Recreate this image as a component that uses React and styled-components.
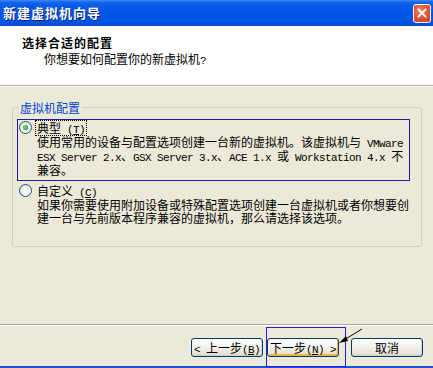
import React from 'react';
import styled, { createGlobalStyle } from 'styled-components';

const GlobalStyle = createGlobalStyle`
  html, body {
    margin: 0;
    padding: 0;
    width: 433px;
    height: 368px;
    overflow: hidden;
    background: #ece9d8;
  }
  body {
    font-family: "Noto Sans CJK SC", "Liberation Sans", sans-serif;
    font-size: 12px;
    color: #000;
  }
`;

const Window = styled.div`
  width: 433px;
  height: 368px;
  display: flex;
  flex-direction: column;
  background: #ece9d8;
`;

const TitleBar = styled.div`
  height: 26px;
  flex: 0 0 26px;
  display: flex;
  align-items: center;
  justify-content: space-between;
  padding: 0 2px 0 3px;
  box-sizing: border-box;
  background: linear-gradient(
    to bottom,
    #3d8df5 0,
    #1868ee 2px,
    #0a5ce6 5px,
    #0054e3 13px,
    #0056e6 21px,
    #0049cf 26px
  );
`;

const TitleText = styled.span`
  color: #fff;
  font-size: 13px;
  font-weight: bold;
  letter-spacing: 1px;
  line-height: 26px;
  text-shadow: 1px 1px 0 #0a1f7a;
`;

const CloseButton = styled.div`
  width: 18px;
  height: 19px;
  box-sizing: border-box;
  border: 1px solid #fff;
  border-radius: 3px;
  background: radial-gradient(circle at 40% 35%, #f08a6c 0, #e2593a 45%, #c5401d 100%);
  display: flex;
  align-items: center;
  justify-content: center;
`;

const Header = styled.div`
  height: 60px;
  flex: 0 0 60px;
  box-sizing: border-box;
  background: #fff;
  border-bottom: 1px solid #aca899;
  box-shadow: 0 1px 0 #fff;
  padding-top: 10px;
`;

const HeaderTitle = styled.div`
  margin-left: 22px;
  font-weight: bold;
  letter-spacing: 1px;
  line-height: 13px;
`;

const HeaderSub = styled.div`
  margin-left: 44px;
  margin-top: 3px;
  line-height: 13px;
`;

const Content = styled.div`
  flex: 1;
  padding-top: 15px;
`;

const GroupBox = styled.fieldset`
  margin: 0 11px 0 12px;
  padding: 0;
  height: 146px;
  box-sizing: border-box;
  border: 1px solid #d0d0bf;
  border-radius: 3px;
  min-width: 0;
`;

const GroupLegend = styled.legend`
  margin-left: 5px;
  padding: 0 2px;
  color: #0046d5;
  line-height: 13px;
`;

const Option = styled.div`
  margin: ${p => (p.$first ? '5px' : '1px')} 11px 0 4px;
  border: 1px solid ${p => (p.$focused ? '#1c1c9c' : 'transparent')};
  padding: 0 0 4px 1px;
`;

const RadioRow = styled.div`
  height: 15px;
  display: flex;
  align-items: center;
  gap: 3px;
`;

const Radio = styled.span`
  position: relative;
  width: 13px;
  height: 13px;
  box-sizing: border-box;
  border-radius: 50%;
  border: 1px solid #1c5180;
  background: radial-gradient(circle at 65% 70%, #ffffff 0, #f4f3ee 40%, #dcd9cd 100%);
  flex: 0 0 13px;

  &::after {
    content: '';
    display: ${p => (p.$checked ? 'block' : 'none')};
    position: absolute;
    left: 3px;
    top: 3px;
    width: 5px;
    height: 5px;
    border-radius: 50%;
    background: radial-gradient(circle at 40% 40%, #7ee07e 0, #21a121 70%);
  }
`;

const RadioLabel = styled.span`
  line-height: 13px;
  padding: 0 1px;
  border: 1px ${p => (p.$focused ? 'dotted #000' : 'solid transparent')};
`;

const Desc = styled.div`
  padding-left: 18px;
  line-height: 13px;
  white-space: nowrap;
`;

const Latin = styled.span`
  font-family: "Liberation Mono", "DejaVu Sans Mono", monospace;
  font-size: 11px;
  letter-spacing: -0.6px;
  line-height: 10px;
  white-space: pre;
`;

const Footer = styled.div`
  position: relative;
  height: 42px;
  flex: 0 0 42px;
  box-sizing: border-box;
  border-top: 1px solid #aca899;
  box-shadow: inset 0 1px 0 #fff;
  padding: 13px 10px 0 0;
  display: flex;
  justify-content: flex-end;
  align-items: flex-start;
`;

const Button = styled.button`
  width: 72px;
  height: 19px;
  margin-left: ${p => p.$gap || 0}px;
  box-sizing: border-box;
  padding: 0;
  border: 1px solid #003c74;
  border-radius: 3px;
  font-family: inherit;
  font-size: 12px;
  line-height: 15px;
  white-space: nowrap;
  overflow: visible;
  color: #000;
  background: linear-gradient(to bottom, #ffffff 0, #f5f4ef 40%, #e6e3d8 85%, #d6d0c5 100%);
  box-shadow: ${p =>
    p.$default
      ? 'inset 1px 1px 0 #fff0cf, inset -1px -2px 0 #f5b43a, inset 0 0 0 1px #fbd58a'
      : 'inset -1px -1px 0 #d6d0c5'};
`;

const Annotation = styled.div`
  position: absolute;
  left: 266px;
  top: 2px;
  width: 80px;
  height: 40px;
  box-sizing: border-box;
  border: 1px solid #2222d6;
  pointer-events: none;
`;

const Pointer = styled.svg`
  position: absolute;
  left: 336px;
  top: 2px;
  pointer-events: none;
`;

const BottomFrame = styled.div`
  height: 2px;
  flex: 0 0 2px;
  background: #1d54c9;
`;

const App = () => (
  <>
    <GlobalStyle />
    <Window>
      <TitleBar>
        <TitleText>新建虚拟机向导</TitleText>
        <CloseButton>
          <svg width="10" height="10" viewBox="0 0 10 10">
            <path d="M1.5 1.5 L8.5 8.5 M8.5 1.5 L1.5 8.5" stroke="#fff" strokeWidth="1.8" strokeLinecap="square" />
          </svg>
        </CloseButton>
      </TitleBar>

      <Header>
        <HeaderTitle>选择合适的配置</HeaderTitle>
        <HeaderSub>你想要如何配置你的新虚拟机<Latin>?</Latin></HeaderSub>
      </Header>

      <Content>
        <GroupBox>
          <GroupLegend>虚拟机配置</GroupLegend>
          <Option $first $focused>
            <RadioRow>
              <Radio $checked />
              <RadioLabel $focused>典型<Latin> (<u>T</u>)</Latin></RadioLabel>
            </RadioRow>
            <Desc>
              使用常用的设备与配置选项创建一台新的虚拟机。该虚拟机与<Latin> VMware</Latin>
              <br />
              <Latin>ESX Server 2.x</Latin>、<Latin>GSX Server 3.x</Latin>、<Latin>ACE 1.x </Latin>或
              <Latin> Workstation 4.x </Latin>不
              <br />
              兼容。
            </Desc>
          </Option>
          <Option>
            <RadioRow>
              <Radio />
              <RadioLabel>自定义<Latin> (<u>C</u>)</Latin></RadioLabel>
            </RadioRow>
            <Desc>
              如果你需要使用附加设备或特殊配置选项创建一台虚拟机或者你想要创
              <br />
              建一台与先前版本程序兼容的虚拟机，那么请选择该选项。
            </Desc>
          </Option>
        </GroupBox>
      </Content>

      <Footer>
        <Button><Latin>&lt; </Latin>上一步<Latin>(<u>B</u>)</Latin></Button>
        <Button $gap={4} $default>下一步<Latin>(<u>N</u>) &gt;</Latin></Button>
        <Button $gap={12}>取消</Button>
        <Annotation />
        <Pointer width="30" height="20" viewBox="0 0 30 20">
          <line x1="26" y1="2" x2="8" y2="13" stroke="#000" strokeWidth="1" />
          <path d="M3 16 L10 9 L12 14 Z" fill="#000" />
        </Pointer>
      </Footer>
      <BottomFrame />
    </Window>
  </>
);

export default App;
